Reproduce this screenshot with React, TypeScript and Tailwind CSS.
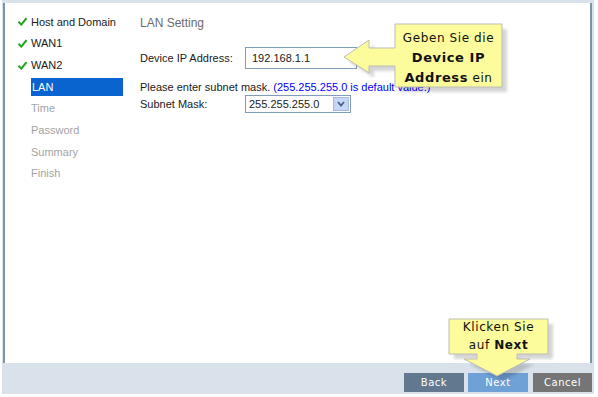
import React from "react";

type Step = { label: string; state: "done" | "active" | "todo" };

const steps: Step[] = [
  { label: "Host and Domain", state: "done" },
  { label: "WAN1", state: "done" },
  { label: "WAN2", state: "done" },
  { label: "LAN", state: "active" },
  { label: "Time", state: "todo" },
  { label: "Password", state: "todo" },
  { label: "Summary", state: "todo" },
  { label: "Finish", state: "todo" },
];

function Check() {
  return (
    <svg width="9" height="9" viewBox="0 0 9 9">
      <path d="M0.5 4.8 L3.3 7.6 L8.5 1.2" fill="none" stroke="#1fa51f" strokeWidth="2" />
    </svg>
  );
}

function Callouts() {
  const ipPath =
    "M395 24 L502 24 L502 87 L395 87 L395 66 L369 66 L369 73 L344 57 L369 40 L369 48 L395 48 Z";
  const nextPath =
    "M449 319 L548 319 L548 354 L517 354 L517 359 L530 359 L497 376 L464 359 L477 359 L477 354 L449 354 Z";
  return (
    <svg className="pointer-events-none absolute left-0 top-0" width="598" height="397">
      <defs>
        <filter id="blur" x="-20%" y="-20%" width="140%" height="140%">
          <feGaussianBlur stdDeviation="1.5" />
        </filter>
      </defs>
      <path d={ipPath} transform="translate(5 5)" fill="#000" opacity="0.16" filter="url(#blur)" />
      <path d={nextPath} transform="translate(5 5)" fill="#000" opacity="0.16" filter="url(#blur)" />
      <path d={ipPath} fill="#fcfc9c" stroke="#bdbdb0" strokeWidth="1" />
      <path d={nextPath} fill="#fcfc9c" stroke="#bdbdb0" strokeWidth="1" />
    </svg>
  );
}

export default function App() {
  return (
    <div className="relative h-[397px] w-[598px] bg-white font-['Liberation_Sans',Arial,sans-serif] text-[11px] text-[#1a1a1a]">
      <div className="ml-[2px] flex h-[394px] w-[592px] flex-col bg-[#d9e2ea] pl-[1px] pr-[2px] pt-[3px]">
        <div className="flex flex-1 border-l-2 border-r-2 border-[#7d95a3] bg-white">
          <div className="w-[127px] pt-[8px]">
            {steps.map((step) => (
              <div key={step.label} className="flex h-[21.7px] items-center pl-[13px]">
                <span className="flex w-[13px] items-center">{step.state === "done" && <Check />}</span>
                {step.state === "active" ? (
                  <span className="flex h-[18px] w-[92px] items-center bg-[#0a64d0] pl-[1px] text-white">
                    {step.label}
                  </span>
                ) : (
                  <span className={step.state === "done" ? "text-[#1a1a1a]" : "text-[#a3a3a3]"}>
                    {step.label}
                  </span>
                )}
              </div>
            ))}
          </div>

          <div className="flex-1 pl-[8px] pt-[12px]">
            <div className="text-[12px] leading-[16px] text-[#6b6b6b]">LAN Setting</div>

            <div className="mt-[16px] flex items-center">
              <span className="w-[105px]">Device IP Address:</span>
              <div className="flex h-[22px] w-[112px] items-center border border-[#7f9db9] pl-[6px]">192.168.1.1</div>
            </div>

            <div className="mt-[11px] leading-[14px]">
              Please enter subnet mask. <span className="text-[#0000ff]">(255.255.255.0 is default value.)</span>
            </div>

            <div className="mt-[1px] flex items-center">
              <span className="w-[105px]">Subnet Mask:</span>
              <div className="flex h-[18px] w-[106px] items-center justify-between border border-[#7f9db9] pl-[3px] pr-[1px]">
                <span>255.255.255.0</span>
                <span className="flex h-[14px] w-[16px] items-center justify-center border border-[#aabbdd] bg-[#c6d6f6]">
                  <svg width="8" height="6" viewBox="0 0 8 6">
                    <path d="M1 1 L4 4.5 L7 1" fill="none" stroke="#4a5f86" strokeWidth="1.8" />
                  </svg>
                </span>
              </div>
            </div>
          </div>
        </div>

        <div className="flex h-[31px] items-start justify-end gap-[4px] pt-[10px] font-['DejaVu_Sans',Verdana,sans-serif] text-[10px] tracking-[0.5px] text-white">
          <button type="button" className="h-[19px] w-[60px] bg-[#61788f]">Back</button>
          <button type="button" className="h-[19px] w-[60px] bg-[#6fa0d6]">Next</button>
          <button type="button" className="ml-[1px] h-[19px] w-[59px] bg-[#757575]">Cancel</button>
        </div>
      </div>

      <Callouts />

      <div className="absolute left-[395px] top-[28px] w-[107px] text-center font-['DejaVu_Sans',Verdana,sans-serif] text-[12px] leading-[20px] tracking-[0.6px] text-[#111]">
        <div>Geben Sie die</div>
        <div className="text-[13px] font-bold">Device IP</div>
        <div>
          <b className="text-[13px]">Address</b> ein
        </div>
      </div>

      <div className="absolute left-[449px] top-[318px] w-[99px] text-center font-['DejaVu_Sans',Verdana,sans-serif] text-[12px] leading-[18px] tracking-[0.6px] text-[#111]">
        <div>Klicken Sie</div>
        <div>
          auf <b>Next</b>
        </div>
      </div>
    </div>
  );
}
